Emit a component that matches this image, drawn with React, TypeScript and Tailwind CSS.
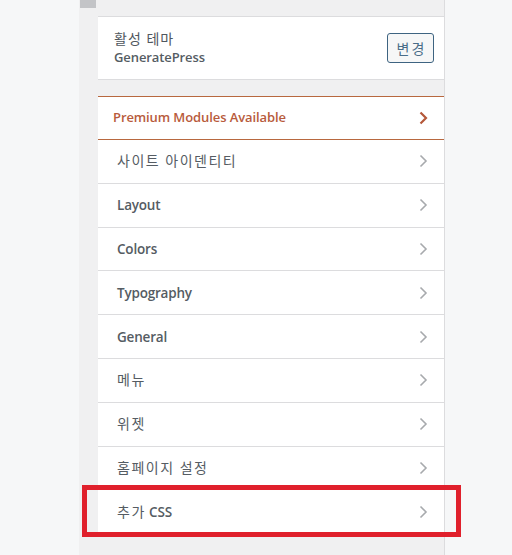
import React from "react";

type Part = { t: string; ko?: boolean };
const rows: Part[][] = [
  [{ t: "사이트 아이덴티티", ko: true }],
  [{ t: "Layout" }],
  [{ t: "Colors" }],
  [{ t: "Typography" }],
  [{ t: "General" }],
  [{ t: "메뉴", ko: true }],
  [{ t: "위젯", ko: true }],
  [{ t: "홈페이지 설정", ko: true }],
  [{ t: "추가", ko: true }, { t: " CSS" }],
];

function Chevron({ color, width = 1.6 }: { color: string; width?: number }) {
  return (
    <svg width="9" height="14" viewBox="0 0 9 14" fill="none">
      <path d="M1.5 1.5 L7 7 L1.5 12.5" stroke={color} strokeWidth={width} strokeLinecap="butt" strokeLinejoin="miter" />
    </svg>
  );
}

export default function App() {
  const font = { fontFamily: '"Open Sans", "Noto Sans CJK KR", sans-serif' };
  return (
    <div
      className="relative w-[512px] h-[555px] bg-[#f6f7f8] flex overflow-hidden"
      style={font}
    >
      <div className="w-[79px] shrink-0" />
      <div className="w-[366px] shrink-0 bg-[#f0f0f1] border-r border-[#dcdcde] flex">
        <div className="w-[19px] shrink-0 pl-[1px]">
          <div className="w-[16px] h-[8px] bg-[#c3c4c7]" />
        </div>
        <div className="flex-1 flex flex-col pt-[16px]">
          <div className="h-[64px] bg-white border-y border-[#dcdcde] flex items-center justify-between pl-[16px] pr-[10px]">
            <div className="flex flex-col leading-[18px]">
              <span className="text-[14px] tracking-[1px] text-[#50575e]">활성 테마</span>
              <span className="text-[13px] font-semibold text-[#555c63] tracking-[-0.1px]">GeneratePress</span>
            </div>
            <div className="w-[47px] h-[30px] rounded-[3px] border border-[#3e6481] bg-[#f6f7f7] flex items-center justify-center text-[14px] tracking-[2px] pl-[2px] text-[#4a6d88]">
              변경
            </div>
          </div>
          <div className="mt-[16px] flex flex-col">
            <div className="h-[44px] bg-white border-y border-[#b8683f] flex items-center justify-between pl-[15px] pr-[16px]">
              <span className="text-[13px] font-semibold text-[#b85b3c] tracking-[-0.1px]">
                Premium Modules Available
              </span>
              <Chevron color="#b5583a" width={2.2} />
            </div>
            {rows.map((parts, i) => (
              <div
                key={i}
                className="h-[43.8px] bg-white border-b border-[#dcdcde] flex items-center justify-between pl-[19px] pr-[16px]"
              >
                <span className="text-[#555c63] whitespace-pre text-[14px] leading-[20px]">
                  {parts.map((p, j) =>
                    p.ko ? (
                      <span key={j} className="text-[14px] font-normal tracking-[1.5px]">
                        {p.t}
                      </span>
                    ) : (
                      <span key={j} className="text-[13.5px] font-semibold tracking-[-0.2px]">
                        {p.t}
                      </span>
                    )
                  )}
                </span>
                <Chevron color="#a7aaad" />
              </div>
            ))}
          </div>
        </div>
      </div>
      <div className="absolute left-[82px] top-[485px] w-[379px] h-[52px] border-[5px] border-[#e0202c]" />
    </div>
  );
}
